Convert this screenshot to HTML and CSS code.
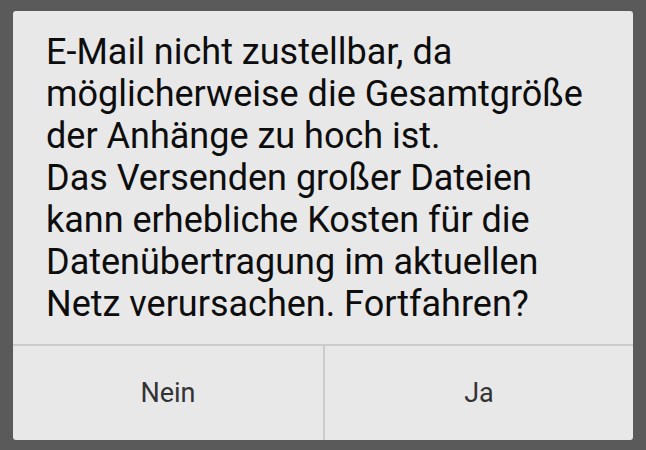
FILE: index.html
```html
<!DOCTYPE html>
<html lang="de">
<head>
<meta charset="utf-8">
<link rel="stylesheet" href="styles.css">
</head>
<body>
<div class="dialog">
  <div class="message">E-Mail nicht zustellbar, da<br>möglicherweise die Gesamtgröße<br>der Anhänge zu hoch ist.<br>Das Versenden großer Dateien<br>kann erhebliche Kosten für die<br>Datenübertragung im aktuellen<br>Netz verursachen. Fortfahren?</div>
  <div class="buttons">
    <div class="btn">Nein</div>
    <div class="btn">Ja</div>
  </div>
</div>
</body>
</html>
```
FILE: styles.css
```css
html, body {
  margin: 0;
  padding: 0;
  background: #5a5a5a;
}
body {
  width: 646px;
  height: 450px;
  padding: 11px 13px 10px 13px;
  box-sizing: border-box;
  font-family: Roboto, "Noto Sans", sans-serif;
}
.dialog {
  width: 620px;
  height: 429px;
  background: #e8e8e8;
  border-radius: 3px;
  display: flex;
  flex-direction: column;
  overflow: hidden;
}
.message {
  padding: 20px 10px 0 33px;
  font-size: 36px;
  line-height: 42px;
  color: #0d0d0d;
  height: 333px;
  box-sizing: border-box;
  white-space: nowrap;
}
.buttons {
  flex: 1;
  display: grid;
  grid-template-columns: 1fr 1fr;
  border-top: 2px solid #cbcbcb;
}
.btn {
  display: flex;
  align-items: center;
  justify-content: center;
  font-size: 27px;
  color: #333333;
}
.btn + .btn {
  border-left: 2px solid #cbcbcb;
}
```
